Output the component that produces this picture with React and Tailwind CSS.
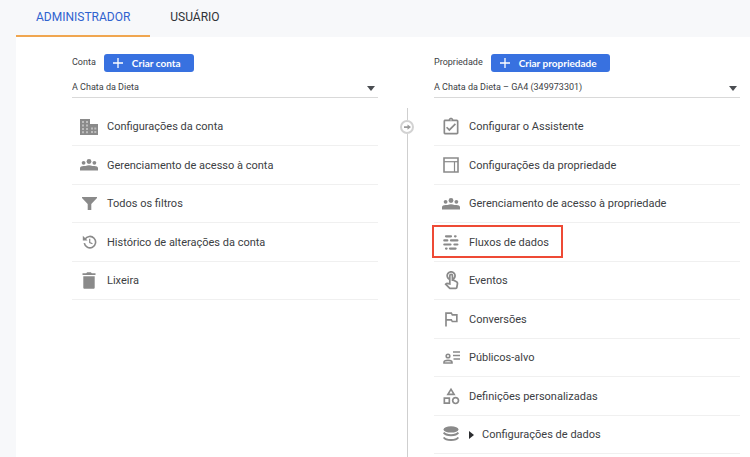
import React, { useState } from "react";
import {
  MdOutlineAssignmentTurnedIn,
  MdOutlineCategory,
  MdOutlineTouchApp,
  MdOutlinedFlag,
} from "react-icons/md";

const BuildingIcon = () => (
  <svg width="18" height="16" viewBox="0 0 18 16" fill="currentColor">
    <path d="M0 0h10v5h8v11H0z" />
    <g fill="#bdbdbd">
      <path d="M2 2h2v2H2zM6 2h2v2H6zM2 5.5h2v2H2zM6 5.5h2v2H6zM2 9h2v2H2zM6 9h2v2H6zM2 12.3h2v2H2zM6 12.3h2v2H6z" />
      <path d="M11 8.5h2v2h-2zM14.3 8.5h2v2h-2zM11 12h2v2h-2zM14.3 12h2v2h-2z" />
    </g>
  </svg>
);

const GroupIcon = () => (
  <svg width="18" height="12" viewBox="0 0 18 12" fill="currentColor">
    <circle cx="9" cy="2.5" r="2.4" />
    <circle cx="3.6" cy="3.8" r="1.9" />
    <circle cx="14.4" cy="3.8" r="1.9" />
    <path d="M0 9C0 7.500 1.500 7 3.600 6.900c.8 0 1.400.1 2 .2 1-.6 2.100-.9 3.400-.9s2.400.3 3.400.9c.6-.1 1.200-.2 2-.2C16.500 7 18 7.500 18 9v2.500H0z" />
  </svg>
);

const FunnelIcon = () => (
  <svg width="15" height="13" viewBox="0 0 15 13" fill="currentColor">
    <path d="M0 0h15v1L9.300 7v6H5.700V7L0 1z" />
  </svg>
);

const HistoryIcon = () => (
  <svg width="15" height="14" viewBox="0 0 15 14" fill="none" stroke="currentColor" strokeWidth="1.600">
    <path d="M2.300 8.200A5.700 5.700 0 1 0 3 4.200" />
    <path d="M.8.8v4.800h4.800z" fill="currentColor" stroke="none" />
    <path d="M7.700 3.800v3.700l2.800 1.300" strokeWidth="1.200" />
  </svg>
);

const TrashIcon = () => (
  <svg width="14" height="17" viewBox="0 0 14 17" fill="currentColor">
    <path d="M.5 1.300h3.700L5.200.2h3.600l1 1.100h3.700v1.800H.5zM1.300 4.200h11.400v11.300c0 .8-.5 1.300-1.300 1.300H2.600c-.8 0-1.300-.5-1.300-1.300z" />
  </svg>
);

const LayoutIcon = () => (
  <svg width="16" height="16" viewBox="0 0 16 16" fill="none" stroke="currentColor">
    <path d="M1 1h14v14H1z" strokeWidth="1.600" />
    <path d="M1 4.700h14" strokeWidth="1.200" />
    <path d="M11.500 4.700V15" strokeWidth="1.200" />
  </svg>
);

const StreamIcon = () => (
  <svg width="16" height="15" viewBox="0 0 16 15" fill="none" stroke="currentColor" strokeWidth="2.200" strokeLinecap="round">
    <path d="M3 1.300h5M12 1.300h.6M1.300 5.400h3M8 5.400h6.400M1.300 9.500h6.200M11.400 9.500h3M3 13.600h.6M7 13.600h5.600" />
  </svg>
);

const AudienceIcon = () => (
  <svg width="17" height="13" viewBox="0 0 17 13" fill="none" stroke="currentColor" strokeWidth="1.600">
    <circle cx="5" cy="5" r="1.800" />
    <path d="M1 12v-.7C1 9.800 3.200 9.400 5 9.400s4 .4 4 1.900v.7z" />
    <path d="M10 1h7M10 4.500h7M10.500 8H17" />
  </svg>
);

const DatabaseIcon = () => (
  <svg width="16" height="16" viewBox="0 0 16 16">
    <ellipse cx="8" cy="3.400" rx="7.500" ry="3.200" fill="currentColor" />
    <g fill="none" stroke="currentColor" strokeWidth="2">
      <path d="M.8 6.600c1 1.700 3.800 2.600 7.200 2.600s6.200-.9 7.200-2.600" />
      <path d="M.8 11.400c1 1.700 3.800 2.600 7.200 2.600s6.200-.9 7.200-2.600" />
    </g>
  </svg>
);

const accountItems = [
  { label: "Configurações da conta", icon: <BuildingIcon /> },
  { label: "Gerenciamento de acesso à conta", icon: <GroupIcon /> },
  { label: "Todos os filtros", icon: <FunnelIcon /> },
  { label: "Histórico de alterações da conta", icon: <HistoryIcon /> },
  { label: "Lixeira", icon: <TrashIcon /> },
];

const propertyItems = [
  { label: "Configurar o Assistente", icon: <MdOutlineAssignmentTurnedIn size={20} /> },
  { label: "Configurações da propriedade", icon: <LayoutIcon /> },
  { label: "Gerenciamento de acesso à propriedade", icon: <GroupIcon /> },
  { label: "Fluxos de dados", icon: <StreamIcon />, highlighted: true },
  { label: "Eventos", icon: <MdOutlineTouchApp size={21} /> },
  { label: "Conversões", icon: <MdOutlinedFlag size={20} /> },
  { label: "Públicos-alvo", icon: <AudienceIcon /> },
  { label: "Definições personalizadas", icon: <MdOutlineCategory size={20} /> },
  { label: "Configurações de dados", icon: <DatabaseIcon />, expandable: true },
];

function Tab({ label, active, onClick }) {
  return (
    <button
      type="button"
      role="tab"
      aria-selected={active}
      onClick={onClick}
      className={`border-b-2 px-5 pb-0.5 text-[12px] ${
        active ? "border-[#f0a650] text-[#2f62cf]" : "border-transparent text-[#303236]"
      }`}
    >
      {label}
    </button>
  );
}

function MenuItem({ label, icon, highlighted, expandable }) {
  return (
    <li className="relative border-b border-[#f0f0f0]">
      <a href="#" className="flex h-full items-center gap-[9px] pl-2">
        <span className="flex w-[18px] shrink-0 justify-center text-[#8a8a8a] [&>svg]:shrink-0">
          {icon}
        </span>
        <span className="flex items-center gap-2 pt-0.5">
          {expandable && (
            <svg width="5" height="8" viewBox="0 0 5 8" className="fill-[#2b2d30]">
              <path d="M0 0l5 4-5 4z" />
            </svg>
          )}
          {label}
        </span>
      </a>
      {highlighted && (
        <span className="pointer-events-none absolute -left-0.5 top-0.5 bottom-[3px] w-[131px] border-2 border-[#ee4a35]" />
      )}
    </li>
  );
}

function Column({ id, title, action, selected, items }) {
  return (
    <section className="flex flex-col">
      <div className="flex h-[18px] items-center gap-2 text-[9px]">
        <label htmlFor={id}>{title}</label>
        <button
          type="button"
          className="flex h-full items-center gap-2 rounded-[3px] bg-[#3871e0] pr-[13px] pl-2 font-[Lato,sans-serif] text-[10px] font-bold text-white"
        >
          <svg width="12" height="12" viewBox="0 0 12 12" fill="none" stroke="currentColor" strokeWidth="1.300">
            <path d="M6 1v10M1 6h10" />
          </svg>
          {action}
        </button>
      </div>
      <div className="relative mt-1 border-b border-[#d9d9d9]">
        <select id={id} className="block h-[21px] w-full appearance-none bg-transparent pt-[3px] text-[9px] outline-none">
          <option>{selected}</option>
        </select>
        <svg
          width="8"
          height="5"
          viewBox="0 0 8 5"
          className="pointer-events-none absolute right-[3px] top-[10px] fill-[#4a4d51]"
        >
          <path d="M0 0h8L4 5z" />
        </svg>
      </div>
      <ul className="mt-[10px] grid flex-1 grid-rows-[repeat(9,minmax(36px,1fr))] text-[11px]">
        {items.map((item) => (
          <MenuItem key={item.label} {...item} />
        ))}
      </ul>
    </section>
  );
}

export default function App() {
  const [tab, setTab] = useState("admin");

  return (
    <div className="flex min-h-screen flex-col bg-[#f7f8fa] pl-4 font-[Roboto,sans-serif] text-[#3c4043]">
      <div role="tablist" className="flex h-[37px]">
        <Tab label="ADMINISTRADOR" active={tab === "admin"} onClick={() => setTab("admin")} />
        <Tab label="USUÁRIO" active={tab === "user"} onClick={() => setTab("user")} />
      </div>
      <main className="grid flex-1 grid-cols-[1fr_56px_1fr] bg-white pt-[17px] pr-[10px] pb-[3px] pl-14">
        <Column
          id="conta"
          title="Conta"
          action="Criar conta"
          selected="A Chata da Dieta"
          items={accountItems}
        />
        {/* Divider between the account and property columns */}
        <div className="-mb-[3px] flex flex-col items-center pt-[54px] pl-0.5">
          <div className="h-3 w-px bg-[#cfcfcf]" />
          <div className="flex size-[14px] items-center justify-center rounded-full border-2 border-[#d2d2d2]">
            <svg width="7" height="6" viewBox="0 0 8 6" className="fill-[#9a9a9a]">
              <path d="M0 2h4V0l4 3-4 3V4H0z" />
            </svg>
          </div>
          <div className="w-px flex-1 bg-[#cfcfcf]" />
        </div>
        <Column
          id="propriedade"
          title="Propriedade"
          action="Criar propriedade"
          selected="A Chata da Dieta – GA4 (349973301)"
          items={propertyItems}
        />
      </main>
    </div>
  );
}
